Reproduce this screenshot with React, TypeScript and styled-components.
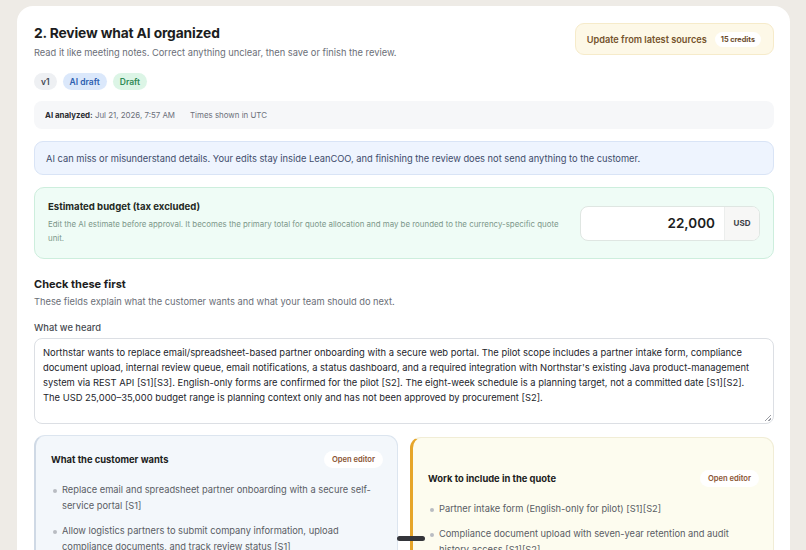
import styled, { createGlobalStyle } from "styled-components";

const GlobalStyle = createGlobalStyle`
  html, body {
    margin: 0;
    padding: 0;
    background: #eeebe6;
    font-family: Inter, "Noto Sans", sans-serif;
    color: #1c1d21;
    overflow: hidden;
  }
`;

const Page = styled.div`
  padding: 6px 16px 0 17px;
  height: 550px;
  box-sizing: border-box;
`;

const Panel = styled.section`
  background: #ffffff;
  border-radius: 16px;
  padding: 17px 16px 40px 17px;
  position: relative;
  min-height: 600px;
  box-sizing: border-box;
`;

const Header = styled.div`
  display: flex;
  justify-content: space-between;
  align-items: flex-start;
`;

const Title = styled.h1`
  margin: 0;
  font-size: 13.8px;
  font-weight: 700;
  letter-spacing: -0.01em;
  line-height: 20px;
`;

const Lead = styled.p`
  margin: 3px 0 0;
  font-size: 9.3px;
  line-height: 14px;
  color: #6b6f78;
`;

const UpdateButton = styled.button`
  display: flex;
  align-items: center;
  gap: 8px;
  height: 32px;
  padding: 0 12px 0 11px;
  background: #fdf8e7;
  border: 1px solid #f6ebca;
  border-radius: 9px;
  font-family: inherit;
  font-size: 9.2px;
  font-weight: 600;
  color: #75532c;
`;

const Credits = styled.span`
  background: #ffffff;
  border-radius: 999px;
  padding: 3px 6px;
  font-size: 7.3px;
  font-weight: 700;
  color: #6a4a2a;
`;

const Badges = styled.div`
  display: flex;
  gap: 6px;
  margin-top: 13px;
`;

const Badge = styled.span<{ $tone: "gray" | "blue" | "green" }>`
  height: 17px;
  padding: 0 7px;
  display: inline-flex;
  align-items: center;
  border-radius: 999px;
  font-size: 8.5px;
  font-weight: 600;
  background: ${(p) =>
    p.$tone === "blue" ? "#dbe8fb" : p.$tone === "green" ? "#dcf5e6" : "#eef0f3"};
  color: ${(p) =>
    p.$tone === "blue" ? "#2d5fb0" : p.$tone === "green" ? "#2f8a57" : "#444a55"};
`;

const Meta = styled.div`
  margin-top: 11px;
  height: 28px;
  background: #f6f7f9;
  border-radius: 8px;
  display: flex;
  align-items: center;
  padding: 0 11px;
  gap: 15px;
  font-size: 7.9px;
  color: #6c707a;
`;

const MetaLabel = styled.span`
  b {
    font-weight: 700;
    color: #2a2c31;
  }
`;

const Notice = styled.div`
  margin-top: 12px;
  height: 34px;
  box-sizing: border-box;
  border: 1px solid #d9e4f6;
  background: #eef4fe;
  border-radius: 9px;
  display: flex;
  align-items: center;
  padding: 0 11px;
  font-size: 9.3px;
  color: #3e4c6b;
`;

const BudgetBox = styled.div`
  margin-top: 12px;
  border: 1px solid #cdeedd;
  background: #effcf6;
  border-radius: 10px;
  padding: 13px 13px 13px 13px;
  display: flex;
  align-items: center;
  gap: 16px;
`;

const BudgetText = styled.div`
  flex: 1;
`;

const BudgetTitle = styled.div`
  font-size: 9.6px;
  font-weight: 700;
  color: #1f2a24;
`;

const BudgetHint = styled.div`
  margin-top: 5px;
  font-size: 7.9px;
  line-height: 14px;
  color: #7c978a;
`;

const AmountField = styled.div`
  width: 180px;
  height: 35px;
  box-sizing: border-box;
  border: 1px solid #dfe6e2;
  border-radius: 8px;
  background: #fff;
  display: flex;
  overflow: hidden;
`;

const Amount = styled.div`
  flex: 1;
  display: flex;
  align-items: center;
  justify-content: flex-end;
  padding-right: 9px;
  font-size: 13.5px;
  font-weight: 600;
  color: #1c1d21;
`;

const Currency = styled.div`
  width: 34px;
  background: #f7f7f6;
  border-left: 1px solid #eceeed;
  display: flex;
  align-items: center;
  justify-content: center;
  font-size: 8px;
  font-weight: 700;
  color: #3a3d44;
`;

const SectionTitle = styled.h2`
  margin: 17px 0 0;
  font-size: 11px;
  line-height: 16px;
  font-weight: 700;
  color: #1c1d21;
`;

const SectionHint = styled.p`
  margin: 3px 0 0;
  font-size: 9.3px;
  line-height: 14px;
  color: #6b6f78;
`;

const FieldLabel = styled.div`
  margin-top: 12px;
  font-size: 9.3px;
  line-height: 14px;
  font-weight: 500;
  color: #474a51;
`;

const NoteArea = styled.div`
  margin-top: 3px;
  height: 86px;
  box-sizing: border-box;
  border: 1px solid #dcdfe4;
  border-radius: 8px;
  padding: 6px 15px 6px 8px;
  font-size: 9.4px;
  line-height: 15px;
  color: #23252b;
  position: relative;
`;

const Grip = styled.span`
  position: absolute;
  right: 2px;
  bottom: 2px;
  width: 6px;
  height: 6px;
  background: linear-gradient(135deg, transparent 45%, #9a9ca3 45%, #9a9ca3 55%, transparent 55%, transparent 75%, #9a9ca3 75%, #9a9ca3 85%, transparent 85%);
`;

const Columns = styled.div`
  margin-top: 11px;
  display: grid;
  grid-template-columns: 1fr 1fr;
  align-items: start;
  gap: 12px;
  position: relative;
`;

const Card = styled.div<{ $tone: "blue" | "amber" }>`
  border-radius: 11px;
  border: 1px solid ${(p) => (p.$tone === "blue" ? "#dce5ef" : "#f1edd6")};
  border-left: ${(p) => (p.$tone === "blue" ? "2px solid #cfd9e5" : "3px solid #e6a52a")};
  background: ${(p) => (p.$tone === "blue" ? "#f3f7fb" : "#fdfcef")};
  padding: ${(p) => (p.$tone === "blue" ? "15px 14px 0 15px" : "32px 14px 0 15px")};
  height: 130px;
  margin-top: ${(p) => (p.$tone === "blue" ? "0" : "2px")};
`;

const CardHead = styled.div`
  display: flex;
  justify-content: space-between;
  align-items: center;
`;

const CardTitle = styled.div`
  font-size: 9.4px;
  font-weight: 700;
  color: #1c1d21;
`;

const EditorButton = styled.span`
  background: #ffffff;
  border-radius: 999px;
  padding: 4px 8px;
  font-size: 7.6px;
  font-weight: 600;
  color: #8a5533;
`;

const Bullets = styled.ul`
  margin: 14px 0 0;
  padding: 0;
  list-style: none;
  display: flex;
  flex-direction: column;
  gap: 9px;
`;

const Bullet = styled.li`
  position: relative;
  padding-left: 11px;
  font-size: 9.3px;
  line-height: 16px;
  color: #5a5d64;

  &::before {
    content: "";
    position: absolute;
    left: 2px;
    top: 7px;
    width: 4px;
    height: 4px;
    border-radius: 50%;
    background: #b9bcc2;
  }
`;

const Splitter = styled.div`
  position: absolute;
  left: 363px;
  top: 101px;
  width: 28px;
  height: 5px;
  border-radius: 3px;
  background: #34353a;
`;

export default function App() {
  return (
    <>
      <GlobalStyle />
      <Page>
        <Panel>
          <Header>
            <div>
              <Title>2. Review what AI organized</Title>
              <Lead>
                Read it like meeting notes. Correct anything unclear, then save or finish the review.
              </Lead>
            </div>
            <UpdateButton>
              Update from latest sources
              <Credits>15 credits</Credits>
            </UpdateButton>
          </Header>

          <Badges>
            <Badge $tone="gray">v1</Badge>
            <Badge $tone="blue">AI draft</Badge>
            <Badge $tone="green">Draft</Badge>
          </Badges>

          <Meta>
            <MetaLabel>
              <b>AI analyzed:</b> Jul 21, 2026, 7:57 AM
            </MetaLabel>
            <span>Times shown in UTC</span>
          </Meta>

          <Notice>
            AI can miss or misunderstand details. Your edits stay inside LeanCOO, and finishing the review does not send anything to the customer.
          </Notice>

          <BudgetBox>
            <BudgetText>
              <BudgetTitle>Estimated budget (tax excluded)</BudgetTitle>
              <BudgetHint>
                Edit the AI estimate before approval. It becomes the primary total for quote allocation and may be rounded to the currency-specific quote unit.
              </BudgetHint>
            </BudgetText>
            <AmountField>
              <Amount>22,000</Amount>
              <Currency>USD</Currency>
            </AmountField>
          </BudgetBox>

          <SectionTitle>Check these first</SectionTitle>
          <SectionHint>These fields explain what the customer wants and what your team should do next.</SectionHint>

          <FieldLabel>What we heard</FieldLabel>
          <NoteArea>
            Northstar wants to replace email/spreadsheet-based partner onboarding with a secure web portal. The pilot scope includes a partner intake form, compliance document upload, internal review queue, email notifications, a status dashboard, and a required integration with Northstar's existing Java product-management system via REST API [S1][S3]. English-only forms are confirmed for the pilot [S2]. The eight-week schedule is a planning target, not a committed date [S1][S2]. The USD 25,000–35,000 budget range is planning context only and has not been approved by procurement [S2].
            <Grip />
          </NoteArea>

          <Columns>
            <Card $tone="blue">
              <CardHead>
                <CardTitle>What the customer wants</CardTitle>
                <EditorButton>Open editor</EditorButton>
              </CardHead>
              <Bullets>
                <Bullet>Replace email and spreadsheet partner onboarding with a secure self-service portal [S1]</Bullet>
                <Bullet>Allow logistics partners to submit company information, upload compliance documents, and track review status [S1]</Bullet>
              </Bullets>
            </Card>
            <Card $tone="amber">
              <CardHead>
                <CardTitle>Work to include in the quote</CardTitle>
                <EditorButton>Open editor</EditorButton>
              </CardHead>
              <Bullets>
                <Bullet>Partner intake form (English-only for pilot) [S1][S2]</Bullet>
                <Bullet>Compliance document upload with seven-year retention and audit history access [S1][S2]</Bullet>
              </Bullets>
            </Card>
            <Splitter />
          </Columns>
        </Panel>
      </Page>
    </>
  );
}
